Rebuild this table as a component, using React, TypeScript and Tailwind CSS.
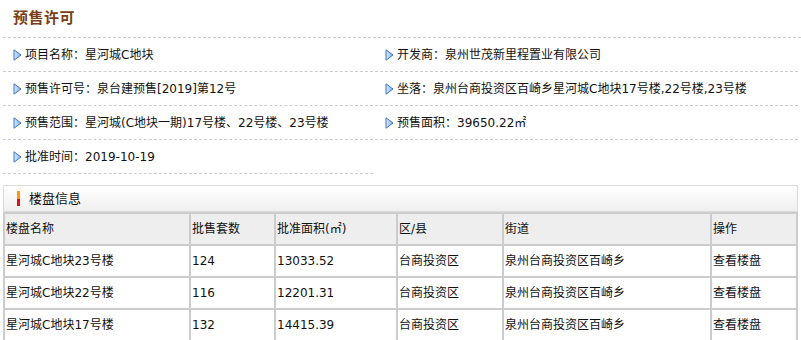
import React from 'react';

const FONT = { fontFamily: '"DejaVu Sans", "Noto Sans CJK SC", sans-serif' };

const Arrow: React.FC = () => (
  <svg width="9" height="12" viewBox="0 0 9 12" className="shrink-0">
    <defs>
      <linearGradient id="ag" x1="0" y1="0" x2="1" y2="0">
        <stop offset="0" stopColor="#dbe9fb" />
        <stop offset="1" stopColor="#7fb0ea" />
      </linearGradient>
    </defs>
    <polygon points="1,0.8 8,6 1,11.2" fill="url(#ag)" stroke="#3a74c4" strokeWidth="1" strokeLinejoin="round" />
  </svg>
);

const info: [string, string][] = [
  ['项目名称', '星河城C地块'],
  ['开发商', '泉州世茂新里程置业有限公司'],
  ['预售许可号', '泉台建预售[2019]第12号'],
  ['坐落', '泉州台商投资区百崎乡星河城C地块17号楼,22号楼,23号楼'],
  ['预售范围', '星河城(C地块一期)17号楼、22号楼、23号楼'],
  ['预售面积', '39650.22㎡'],
  ['批准时间', '2019-10-19'],
];

const headers = ['楼盘名称', '批售套数', '批准面积(㎡)', '区/县', '街道', '操作'];
const rows = [
  ['星河城C地块23号楼', '124', '13033.52', '台商投资区', '泉州台商投资区百崎乡', '查看楼盘'],
  ['星河城C地块22号楼', '116', '12201.31', '台商投资区', '泉州台商投资区百崎乡', '查看楼盘'],
  ['星河城C地块17号楼', '132', '14415.39', '台商投资区', '泉州台商投资区百崎乡', '查看楼盘'],
];

export default function App() {
  return (
    <div className="w-[801px] h-[340px] bg-white text-[12px] text-[#111] overflow-hidden" style={FONT}>
      {/* Title */}
      <div className="ml-[3px] h-[38px] flex items-center pl-[10px] border-b border-dashed border-[#ccc]">
        <h2 className="text-[15px] font-bold text-[#7a3f16] tracking-[0.5px]">预售许可</h2>
      </div>

      {/* Info list */}
      <div className="grid grid-cols-[370px_1fr] gap-x-[2px] px-[3px]">
        {info.map(([label, value]) => (
          <div key={label} className="h-[34px] flex items-center gap-[3px] pl-[10px] border-b border-dashed border-[#ccc]">
            <Arrow />
            <span>{label}：{value}</span>
          </div>
        ))}
      </div>

      {/* Building info */}
      <div className="mt-[11px] mx-[3px]">
        <div className="h-[27px] flex items-center gap-[9px] pl-[13px] border border-[#dcdcdc] bg-gradient-to-b from-white to-[#efefef] text-[13px]">
          <div className="flex flex-col w-[3px] h-[15px]">
            <div className="flex-1 bg-[#ff9900]" />
            <div className="flex-1 bg-[#e01010]" />
          </div>
          <span>楼盘信息</span>
        </div>
        <div className="grid grid-cols-[184px_83px_120px_104px_206px_84px] gap-[2px] p-[2px] bg-[#cccccc]">
          {headers.map((h) => (
            <div key={h} className="h-[30px] flex items-center pl-[1px] bg-[#eeeeee]">{h}</div>
          ))}
          {rows.map((r, i) =>
            r.map((c, j) => (
              <div key={`${i}-${j}`} className="h-[30px] flex items-center pl-[1px] bg-white">{c}</div>
            ))
          )}
        </div>
      </div>
    </div>
  );
}
